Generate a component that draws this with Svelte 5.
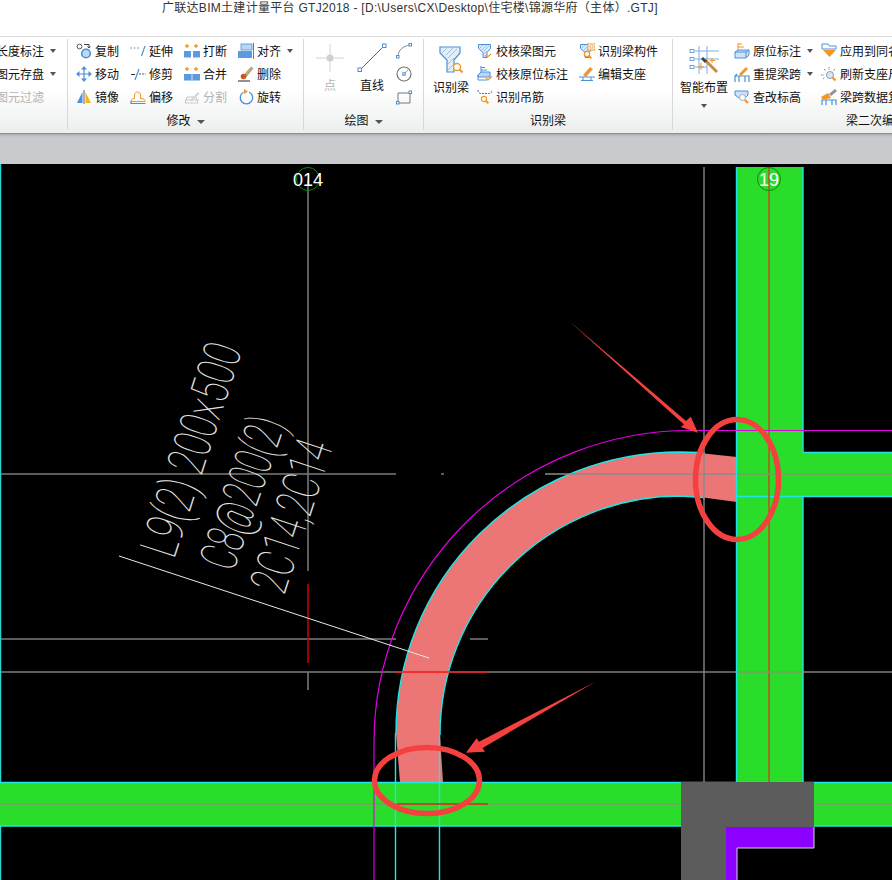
<script>
  const blue = '#4a90d9';
  const pale = '#bcd9f2';
  const orange = '#f2952b';
  const ico = (inner, w = 16, h = 16) =>
    `<svg width="${w}" height="${h}" viewBox="0 0 ${w} ${h}" fill="none" style="display:block">${inner}</svg>`;
  const lens = (x, y) =>
    `<circle cx="${x}" cy="${y}" r="2.6" fill="#fff" stroke="${orange}" stroke-width="1.2"/><path d="M${x + 2} ${y + 2}l2.4 2.4" stroke="${orange}" stroke-width="2"/>`;
  const check = (x, y) => `<path d="M${x} ${y}l2 2 4-3.5" stroke="${orange}" stroke-width="1.2"/>`;
  const funnel = `<path d="M1.5 1.5h12v4l-3.5 4v5H6v-5l-4.5-4z" fill="#dbe9f7" stroke="${blue}"/><path d="M3 5l3-3M5 7l5-5M7 8l5-5M7 11l3-3" stroke="#8fbbe6" stroke-width=".8"/>`;

  const icons = {
    copy: ico(`<circle cx="3.5" cy="3.5" r="2.4" stroke="#555"/><circle cx="10" cy="10.5" r="4.3" fill="${pale}" stroke="${blue}" stroke-width="1.6"/><path d="M8 1.5h5v3M11.6 3.4l1.4 1.6 1.4-1.6" stroke="#444"/>`),
    move: ico(`<path d="M8 0l3 3.500H5zM8 16l3-3.500H5zM0 8l3.500-3v6zM16 8l-3.500-3v6z" fill="${blue}"/><path d="M8 3v10M3 8h10" stroke="${blue}" stroke-width="1.200"/>`),
    mirror: ico(`<path d="M6.5 3v11H1z" fill="${blue}"/><path d="M9.5 3v11H15z" fill="#f7b21c"/><path d="M8 1v14" stroke="#666"/>`),
    offset: ico(`<path d="M1 12.5c0-2 1.5-3 3.5-3V6c0-4 6-4 6 0v3.5c3 0 4.500 1 4.500 3z" stroke="${orange}"/><path d="M1 12v2.500h14.500" stroke="${blue}" stroke-width="1.200"/>`),
    extend: ico(`<path d="M0 5h10" stroke="#8c97a6" stroke-dasharray="2 1.500"/><path d="M15 3l-3.500 10" stroke="${blue}" stroke-width="1.200"/>`),
    trim: ico(`<path d="M1 8.500h4" stroke="#333"/><path d="M9 3l-4 11" stroke="${blue}" stroke-width="1.200"/><path d="M9 8h7" stroke="#555" stroke-dasharray="2 1.200"/>`),
    cut: ico(`<path d="M3 1v4M1 3h4M12 1v4M10 3h4" stroke="${orange}" stroke-width="1.300"/><rect x="0" y="8" width="7" height="6.500" fill="#5a9be0"/><rect x="9" y="8" width="7" height="6.500" fill="#5a9be0"/>`),
    merge: ico(`<path d="M3 1v4M1 3h4M12 1v4M10 3h4" stroke="${orange}" stroke-width="1.300"/><rect x="0" y="8" width="16" height="6.500" fill="#5a9be0"/><path d="M8 8v6.500" stroke="#cfe2f5"/>`),
    split: ico(`<path d="M1 14l2-6h9l2 6zM1 11h14" stroke="#c9c9c9"/><path d="M6 11l8-8 1.500 1.500-8 8z" fill="#d5d5d5"/>`),
    align: ico(`<rect x="3" y="1" width="11" height="6" fill="#b9d6f3" stroke="${blue}" stroke-width=".8"/><rect x="0" y="8" width="14" height="7" fill="#5a9be0"/><path d="M15.500 0v16" stroke="#777"/>`),
    del: ico(`<path d="M6 9l7-8 2 1.500-7 8.500z" fill="#c9a877" stroke="#8a7048" stroke-width=".5"/><circle cx="5.500" cy="10.500" r="2.800" fill="#c9551f"/><path d="M0 15h12" stroke="#222"/>`),
    rotate: ico(`<path d="M5.500 3.200A6.200 6.200 0 1 0 11 3" stroke="${blue}" stroke-width="1.300"/><path d="M6 0v5l4-2.500z" fill="${orange}"/>`),
    point: ico(`<path d="M15 1v28M1 15h28" stroke="#d4d4d4"/><circle cx="15" cy="15" r="3.500" fill="#cfcfcf"/>`, 30, 30),
    line: ico(`<path d="M3 27L27 3" stroke="#666"/><rect x="1" y="25" width="3.500" height="3.500" fill="#fff" stroke="${blue}"/><rect x="25.500" y="1" width="3.500" height="3.500" fill="#fff" stroke="${blue}"/>`, 30, 30),
    arc: ico(`<path d="M2 14C2 7 7 3 14 2" stroke="#888"/><rect x=".5" y="12.500" width="2.500" height="2.500" fill="#fff" stroke="${blue}"/><rect x="13" y=".5" width="2.500" height="2.500" fill="#fff" stroke="${blue}"/>`),
    circle: ico(`<circle cx="8" cy="8" r="7" stroke="#777" stroke-width="1.200"/><path d="M8 8l4-4" stroke="#999"/><rect x="6.800" y="6.800" width="2.400" height="2.400" fill="#fff" stroke="${blue}"/>`),
    rect: ico(`<path d="M2 4h12v10H2z" stroke="#777"/><rect x=".5" y="12.500" width="2.500" height="2.500" fill="#fff" stroke="${blue}"/><rect x="13" y="2" width="2.500" height="2.500" fill="#fff" stroke="${blue}"/>`),
    beam: ico(`<path d="M1 1h20v6l-6 7v12H8V14L1 7z" fill="#e4eef8" stroke="${blue}" stroke-width="1.200"/><path d="M3 7l6-6M7 9l8-8M9 12l9-9M9 18l6-6M9 24l6-6" stroke="#9dc3ea"/><circle cx="18" cy="21" r="3.500" fill="#fff" stroke="${orange}" stroke-width="1.300"/><path d="M20.500 23.500l3 3" stroke="${orange}" stroke-width="2"/>`, 25, 28),
    checkBeam: ico(`${funnel}${check(8, 12.500)}`),
    checkMark: ico(`<path d="M4 0v6M4 1.500h4M4 4h6" stroke="${blue}"/><path d="M1 9l3-3h9v5H1z" fill="#b9d6f3" stroke="${blue}"/><path d="M1 9v5h9" stroke="${blue}"/>${check(9, 12)}`),
    hanger: ico(`<path d="M1 1c0 3 2 3.500 3.500 3.500h7C13 4.500 15 4 15 1" stroke="#5b6b7d" stroke-dasharray="2 1"/>${lens(7, 10)}`),
    beamPart: ico(`${funnel}<rect x="9" y="0" width="7" height="7" fill="#fff" stroke="${orange}"/><rect x="11" y="2" width="3" height="3" stroke="${orange}" stroke-width=".8"/>${lens(8, 11)}`),
    support: ico(`<path d="M4 9l7-8 3 2-7 8z" fill="${orange}"/><path d="M0 11h16M2 14.500h12M4 11v4M12 11v4" stroke="${blue}"/>`),
    wizard: ico(`<path d="M10 1v28M18 1v28M6 6h24M6 14h24M6 22h12" stroke="#7eaee0"/><rect x="1" y="4.500" width="4" height="3" stroke="${blue}" stroke-width=".8"/><rect x="1" y="12.500" width="4" height="3" stroke="${blue}" stroke-width=".8"/><rect x="1" y="20.500" width="4" height="3" stroke="${blue}" stroke-width=".8"/><path d="M16 15l12 12" stroke="#c98a4a" stroke-width="3"/><path d="M13 13l4 4" stroke="#444" stroke-width="3"/><path d="M12 18v7M9 22h6M23 13v5M21 15.500h5" stroke="${orange}"/>`, 30, 30),
    origMark: ico(`<path d="M4 0v7M4 1h4M4 4h6" stroke="${orange}"/><path d="M1 9l3-2h11v5l-3 3H1z" fill="#cfe2f5" stroke="${blue}"/><path d="M1 9h11v6M12 9l3-2" stroke="${blue}"/>`),
    respan: ico(`<path d="M5 8l7-7 2 2-7 7z" fill="${orange}"/><path d="M1 16V10h14v6M1 10l2-2M5 10v6M11 10v6" stroke="${blue}" stroke-width="1.200"/>`),
    elev: ico(`<path d="M1 2h13v4l-3 3H5L1 6z" fill="#cfe2f5" stroke="${blue}"/><circle cx="8.500" cy="8.500" r="3" fill="#fff" stroke="#9aa9b8"/><path d="M11 11l3 3" stroke="${orange}" stroke-width="2.200"/>`),
    apply: ico(`<path d="M1 1h6l1.500 2H15v3H1z" stroke="${blue}"/><path d="M2 7h13l-6.500 7z" fill="${orange}"/>`),
    refresh: ico(`<circle cx="9" cy="9" r="3.500" fill="#dbe6f0" stroke="#8a9bb0"/><path d="M8 1v3M3 3l2 2M0 9h3M14 3l-2 2M2 13l2-2" stroke="${blue}" stroke-dasharray="1.500 .8"/><path d="M11.500 11.500l3 3" stroke="${orange}" stroke-width="2.200"/>`),
    brush: ico(`<path d="M1 16v-5h14v5M1 11v5M5 11v5M11 11v5" stroke="${blue}" stroke-width="1.200"/><path d="M0 8l7-4 3 5-8 2z" fill="${orange}"/><path d="M8 5l6-5 2 2-6 5z" fill="#8a929c"/>`)
  };

  const modify = [
    ['copy', '复制'], ['extend', '延伸'], ['cut', '打断'], ['align', '对齐', true],
    ['move', '移动'], ['trim', '修剪'], ['merge', '合并'], ['del', '删除'],
    ['mirror', '镜像'], ['offset', '偏移'], ['split', '分割', false, true], ['rotate', '旋转']
  ];
  const recognize = [
    ['checkBeam', '校核梁图元'], ['beamPart', '识别梁构件'],
    ['checkMark', '校核原位标注'], ['support', '编辑支座'],
    ['hanger', '识别吊筋']
  ];
  const second = [
    ['origMark', '原位标注', true], ['apply', '应用到同名梁'],
    ['respan', '重提梁跨', true], ['refresh', '刷新支座尺寸'],
    ['elev', '查改标高'], ['brush', '梁跨数据复制']
  ];
</script>

{#snippet item(it)}
  <div class="item" class:off={it[3]}>
    <span class="ico">{@html icons[it[0]]}</span>
    <span>{it[1]}</span>
    {#if it[2]}<i class="caret"></i>{/if}
  </div>
{/snippet}

<div class="page">
  <div class="title">广联达BIM土建计量平台 GTJ2018 - [D:\Users\CX\Desktop\住宅楼\锦源华府<span class="tc">（主体）</span>.GTJ]</div>

  <div class="ribbon">
    <section class="group g1">
      <div class="body stack">
        <div class="item"><span>长度标注</span><i class="caret"></i></div>
        <div class="item"><span>图元存盘</span><i class="caret"></i></div>
        <div class="item off"><span>图元过滤</span></div>
      </div>
    </section>

    <section class="group g2">
      <div class="body grid4">
        {#each modify as it}{@render item(it)}{/each}
      </div>
      <div class="label">修改<i class="caret wide"></i></div>
    </section>

    <section class="group g3">
      <div class="body draw">
        <div class="big off"><span class="ico">{@html icons.point}</span><span>点</span></div>
        <div class="big"><span class="ico">{@html icons.line}</span><span>直线</span></div>
        <div class="stack">
          <div class="item"><span class="ico">{@html icons.arc}</span></div>
          <div class="item"><span class="ico">{@html icons.circle}</span></div>
          <div class="item"><span class="ico">{@html icons.rect}</span></div>
        </div>
      </div>
      <div class="label">绘图<i class="caret wide"></i></div>
    </section>

    <section class="group g4">
      <div class="body split">
        <div class="big recog"><span class="ico">{@html icons.beam}</span><span>识别梁</span></div>
        <div class="grid2">
          {#each recognize as it}{@render item(it)}{/each}
        </div>
      </div>
      <div class="label">识别梁</div>
    </section>

    <section class="group g5">
      <div class="body split">
        <div class="big smart">
          <span class="ico">{@html icons.wizard}</span><span>智能布置</span><i class="caret"></i>
        </div>
        <div class="grid2 tight">
          {#each second as it}{@render item(it)}{/each}
        </div>
      </div>
      <div class="label far">梁二次编辑</div>
    </section>
  </div>

  <div class="band"></div>

  <svg class="canvas" viewBox="0 164 892 716" width="892" height="716">
    <!-- axis and grid lines -->
    <g class="grid-lines">
      <path d="M308 180V571M308 672V690" />
      <path d="M704 167V782" />
      <path d="M0 474H396M441 474H444M0 639H396M470 639H488M0 672H892" />
    </g>
    <path class="thick" d="M0.500 164V880" stroke="#22d6d6" />
    <path class="thick" d="M308 584V663" stroke="#d00000" />

    <!-- arc beam -->
    <path class="pink" d="M400 782L396 733A284 281 0 0 1 680 452L695 452.500L737 457V502L703 497.500L680 496A240 239 0 0 0 440 735L443 782Z" />
    <path class="cy" d="M396 733A284 281 0 0 1 680 452L700 452.500M440 735A240 239 0 0 1 680 496L703 497.500" />
    <path class="thick" d="M545 474H737" stroke="#8f8a8a" />
    <path class="thick" d="M396 672H488" stroke="#f01818" />
    <path class="thick" d="M704 452V500" stroke="#8f8a8a" />

    <!-- straight beams -->
    <rect class="girder" x="737" y="167" width="66" height="615" />
    <rect class="girder" x="803" y="452" width="89" height="44" />
    <rect class="girder" x="0" y="782" width="892" height="44" />
    <path class="cy" d="M736.500 167V782M803 167V452M803 496V782M803 452.500H892M737 496.500H892M0 782.500H892M0 826H681M814 826H892M395.500 733V880M439.500 735V880" />
    <path class="thick" d="M769 167V782" stroke="#bf4f1c" />
    <path class="thick" d="M737 474H892M0 804H681M814 804H892M737 672H803" stroke="#7c9c6c" />
    <path class="thick" d="M397 804H488" stroke="#d8281a" />
    <path class="mag" d="M374 880V742A316 312 0 0 1 690 430.500H892" />

    <!-- column -->
    <path d="M681 782H814V827H726V880H681Z" fill="#5c5c5c" />
    <path d="M726 827H814V848H737V880H726Z" fill="#8c00ff" />
    <path d="M814 827V848H737V880" fill="none" stroke="#d9d0e8" />

    <!-- axis heads -->
    <circle cx="308" cy="179" r="11.500" fill="none" stroke="#0b8a0b" />
    <circle cx="769" cy="179" r="11.500" fill="none" stroke="#0b8a0b" />
    <text class="axis" x="308" y="186">014</text>
    <text class="axis" x="769" y="186">19</text>

    <!-- beam annotation -->
    <path d="M119 556L429 658" stroke="#e8e8e8" />
    <text class="cad" transform="translate(174 560) rotate(-72)" textLength="221" lengthAdjust="spacingAndGlyphs">L9(2) 200x500</text>
    <text class="cad" transform="translate(233 573) rotate(-70.500)" textLength="158" lengthAdjust="spacingAndGlyphs">C8@200(2)</text>
    <text class="cad" transform="translate(284 596) rotate(-71.800)" textLength="157" lengthAdjust="spacingAndGlyphs">2C14,2C14</text>

    <!-- red markup -->
    <ellipse class="mark" cx="737" cy="479.500" rx="41.500" ry="60" />
    <ellipse class="mark" cx="427" cy="780.500" rx="52.500" ry="33" />
    <path class="arrow" d="M568 320L686 421L690.700 416.700L698 432.700L680.700 427L684 424.500Z" />
    <path class="arrow" d="M595 682L479 741.700L476.600 738.300L466 752.700L485 751.700L482.600 748Z" />
  </svg>
</div>

<style>
  :global(body) {
    margin: 0;
    background: #000;
  }

  .page {
    width: 892px;
    height: 880px;
    overflow: hidden;
    display: flex;
    flex-direction: column;
    font-family: "Liberation Sans", "Noto Sans CJK SC", sans-serif;
    font-size: 12px;
    color: #111;
  }

  .title {
    height: 36px;
    box-sizing: border-box;
    background: #fff;
    padding-left: 162px;
    font-size: 12px;
    letter-spacing: 0.29px;
    line-height: 13px;
    white-space: nowrap;
    color: #333;
  }

  .tc {
    font-family: "Noto Sans CJK TC", sans-serif;
  }

  .ribbon {
    height: 98px;
    box-sizing: border-box;
    display: flex;
    flex-shrink: 0;
    border-top: 1px solid #dcdcdc;
    border-bottom: 1px solid #8e9094;
    background: linear-gradient(#fff 0%, #fff 55%, #eceeee 100%);
    padding: 2px 0 3px;
  }

  .group {
    box-sizing: border-box;
    display: flex;
    flex-direction: column;
    flex-shrink: 0;
    border-left: 1px solid #d6d8d9;
  }

  .g1 { width: 67px; border-left: 0; }
  .g2 { width: 236px; }
  .g3 { width: 120px; }
  .g4 { width: 249px; }
  .g5 { width: 220px; }

  .body {
    height: 74px;
  }

  .label {
    height: 18px;
    line-height: 18px;
    margin-top: 3px;
    text-align: center;
    white-space: nowrap;
  }

  .far {
    text-align: left;
    padding-left: 173px;
  }

  .item {
    height: 23px;
    display: flex;
    align-items: center;
    gap: 3px;
    white-space: nowrap;
  }

  .off {
    color: #b4b4b4;
  }

  .ico {
    display: block;
    flex-shrink: 0;
  }

  .caret {
    display: inline-block;
    width: 0;
    height: 0;
    margin-left: 3px;
    border: 3px solid transparent;
    border-top: 4px solid #555;
    border-bottom: 0;
  }

  .wide {
    margin-left: 6px;
    border-width: 4px 4px 0;
    vertical-align: 1px;
  }

  .stack {
    display: flex;
    flex-direction: column;
  }

  .g1 .stack {
    margin-left: -4px;
  }

  .grid4 {
    display: grid;
    grid-template-columns: repeat(4, 54px);
    grid-auto-rows: 23px;
    padding-left: 8px;
  }

  .draw {
    display: flex;
    padding-left: 11px;
  }

  .big {
    width: 30px;
    display: flex;
    flex-direction: column;
    align-items: center;
    white-space: nowrap;
    gap: 3px;
    padding-top: 4px;
  }

  .draw .stack {
    margin-left: 9px;
  }

  .draw .big + .big {
    margin-left: 12px;
  }

  .split {
    display: flex;
  }

  .recog {
    width: 36px;
    margin-left: 9px;
    padding-top: 7px;
    gap: 4px;
  }

  .grid2 {
    display: grid;
    grid-template-columns: 102px 100px;
    grid-auto-rows: 23px;
    margin-left: 8px;
  }

  .smart {
    width: 48px;
    margin-left: 7px;
    padding-top: 6px;
    gap: 3px;
  }

  .smart .caret {
    margin: 6px 0 0;
  }

  .tight {
    grid-template-columns: 87px 100px;
    margin-left: 6px;
  }

  .band {
    height: 30px;
    flex-shrink: 0;
    background: linear-gradient(#a9abae, #c9cacd 3px);
  }

  .canvas {
    display: block;
    flex-shrink: 0;
    background: #000;
  }

  .grid-lines {
    fill: none;
    stroke: #7c7c7c;
    stroke-width: 1.500px;
  }

  .thick { stroke-width: 1.500px; }
  .pink { fill: #ec7575; }
  .cy { fill: none; stroke: #1fe6e6; stroke-width: 1.400px; }
  .mag { fill: none; stroke: #e000e0; stroke-width: 1.200px; }
  .girder { fill: #2bdd2b; }

  .axis {
    fill: #fff;
    font-size: 18px;
    text-anchor: middle;
  }

  .cad {
    fill: #e4e4e4;
    font-family: "Roboto", "Liberation Sans", sans-serif;
    font-weight: 100;
    font-size: 52px;
  }

  .mark {
    fill: none;
    stroke: #f54040;
    stroke-width: 5.500px;
  }

  .arrow {
    fill: #f54040;
  }
</style>
